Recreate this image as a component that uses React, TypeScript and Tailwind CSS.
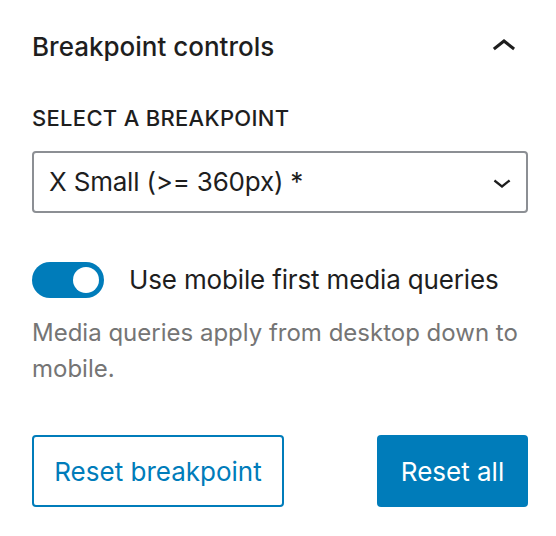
const FONT = "font-['Inter','Noto_Sans',sans-serif]";

function ChevronUp() {
  return (
    <svg width="48" height="48" viewBox="0 0 24 24" aria-hidden="true" className="fill-[#1e1e1e]">
      <path d="M6.5 12.4L12 8l5.5 4.4-.9 1.2L12 10l-4.6 3.6-1-1.2z" />
    </svg>
  );
}

function ChevronDown() {
  return (
    <svg width="36" height="36" viewBox="0 0 24 24" aria-hidden="true" className="fill-[#1e1e1e]">
      <path d="M17.5 11.6L12 16l-5.5-4.4.9-1.2L12 14l4.6-3.6 1 1.2z" />
    </svg>
  );
}

export default function App() {
  return (
    <div className={`w-[556px] h-[536px] bg-white text-[#1e1e1e] pl-[32px] pr-[28px] pt-[23px] ${FONT}`}>
      {/* Panel header */}
      <div className="flex h-[48px] items-center justify-between">
        <h2 className="text-[26px] font-medium leading-[48px]">Breakpoint controls</h2>
        <ChevronUp />
      </div>

      {/* Breakpoint select */}
      <label className="mt-[33px] block text-[22px] font-medium uppercase leading-[28px] tracking-[0.3px]">
        Select a breakpoint
      </label>
      <div className="mt-[19px] flex h-[62px] items-center justify-between rounded-[4px] border-2 border-[#8c8f94] pl-[15px] pr-[6px]">
        <span className="text-[26px] leading-[32px] tracking-[-0.2px]">X Small (&gt;= 360px) *</span>
        <ChevronDown />
      </div>

      {/* Mobile first toggle */}
      <div className="mt-[49px] flex h-[36px] items-center gap-[25px]">
        <div className="flex h-[36px] w-[72px] items-center justify-end rounded-full bg-[#007cba] pr-[5px]">
          <div className="h-[26px] w-[26px] rounded-full bg-white" />
        </div>
        <span className="text-[26px] leading-[36px] tracking-[-0.15px]">Use mobile first media queries</span>
      </div>
      <p className="mt-[17px] text-[24px] leading-[36px] text-[#757575]">
        Media queries apply from desktop down to mobile.
      </p>

      {/* Actions */}
      <div className="mt-[48px] flex items-center justify-between">
        <button className="flex h-[72px] w-[252px] items-center justify-center rounded-[4px] border-2 border-[#007cba] text-[26px] text-[#007cba]">
          Reset breakpoint
        </button>
        <button className="flex h-[72px] w-[151px] items-center justify-center rounded-[4px] bg-[#007cba] text-[26px] text-white">
          Reset all
        </button>
      </div>
    </div>
  );
}
